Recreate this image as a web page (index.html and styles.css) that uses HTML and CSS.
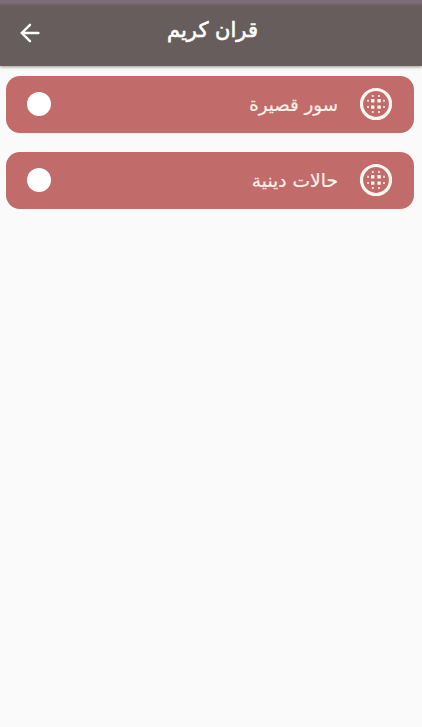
FILE: index.html
```html
<!DOCTYPE html>
<html lang="ar" dir="rtl">
<head>
    <meta charset="UTF-8">
    <meta name="viewport" content="width=device-width, initial-scale=1.0">
    <title>قران كريم</title>
    <link rel="stylesheet" href="styles.css">
</head>
<body>
    <header class="app-bar">
        <span class="bar-space"></span>
        <h1>قران كريم</h1>
        <button class="back" aria-label="رجوع">
            <svg width="20" height="20" viewBox="0 0 20 20" fill="none" stroke="#fff" stroke-width="2.4" stroke-linecap="round">
                <path d="M18.4 10H2M10 1.8L1.8 10l8.2 8.2"/>
            </svg>
        </button>
    </header>

    <main class="list">
        <a class="card">
            <svg class="icon" width="34" height="34" viewBox="0 0 34 34" fill="#fff8f2">
                <circle cx="17" cy="17" r="14.5" fill="none" stroke="#fff8f2" stroke-width="3.2"/>
                <path d="M12 12h3.4v3.4H12zM18.4 12h3.4v3.4h-3.4zM12 18.4h3.4v3.4H12zM18.4 18.4h3.4v3.4h-3.4z"/>
                <g opacity="0.8">
                    <path d="M12.8 8h2v2h-2zM19 8h2v2h-2zM12.8 24h2v2h-2zM19 24h2v2h-2zM8 12.8h2v2H8zM8 19h2v2H8zM24 12.8h2v2h-2zM24 19h2v2h-2z"/>
                </g>
            </svg>
            <span class="label">سور قصيرة</span>
            <span class="dot"></span>
        </a>
        <a class="card">
            <svg class="icon" width="34" height="34" viewBox="0 0 34 34" fill="#fff8f2">
                <circle cx="17" cy="17" r="14.5" fill="none" stroke="#fff8f2" stroke-width="3.2"/>
                <path d="M12 12h3.4v3.4H12zM18.4 12h3.4v3.4h-3.4zM12 18.4h3.4v3.4H12zM18.4 18.4h3.4v3.4h-3.4z"/>
                <g opacity="0.8">
                    <path d="M12.8 8h2v2h-2zM19 8h2v2h-2zM12.8 24h2v2h-2zM19 24h2v2h-2zM8 12.8h2v2H8zM8 19h2v2H8zM24 12.8h2v2h-2zM24 19h2v2h-2z"/>
                </g>
            </svg>
            <span class="label wide">حالات دينية</span>
            <span class="dot"></span>
        </a>
    </main>
</body>
</html>
```
FILE: styles.css
```css
body {
    margin: 0;
    min-height: 727px;
    background-color: #fafafa;
    font-family: "DejaVu Sans", sans-serif;
}

/* Top bar */
.app-bar {
    display: flex;
    align-items: center;
    justify-content: space-between;
    box-sizing: border-box;
    height: 66px;
    padding: 0 17px 5px 20px;
    background: linear-gradient(#7b6c75 3px, #675d5d 6px);
    box-shadow: 0 1px 3px rgba(0, 0, 0, 0.4);
}

.app-bar h1 {
    margin: 0;
    padding-bottom: 1px;
    color: #fff;
    font-size: 21px;
    font-weight: normal;
    -webkit-text-stroke: 0.6px #fff;
}

.bar-space,
.back {
    width: 20px;
}

.back {
    height: 20px;
    margin-top: 5px;
    padding: 0;
    border: none;
    background: none;
}

.back svg {
    display: block;
}

/* List of categories */
.list {
    display: flex;
    flex-direction: column;
    gap: 19px;
    padding: 10px 8px 0 6px;
}

.card {
    display: flex;
    align-items: center;
    box-sizing: border-box;
    height: 57px;
    padding: 0 21px 1px;
    border-radius: 14px;
    background-color: #c16b6a;
    color: #fff1ec;
}

.label {
    flex: 1;
    margin-right: 21px;
    font-size: 18.2px;
    -webkit-text-stroke: 0.2px #fff1ec;
}

.label.wide {
    font-size: 18.7px;
}

.dot {
    width: 24px;
    height: 24px;
    border-radius: 50%;
    background-color: #fff;
}
```
